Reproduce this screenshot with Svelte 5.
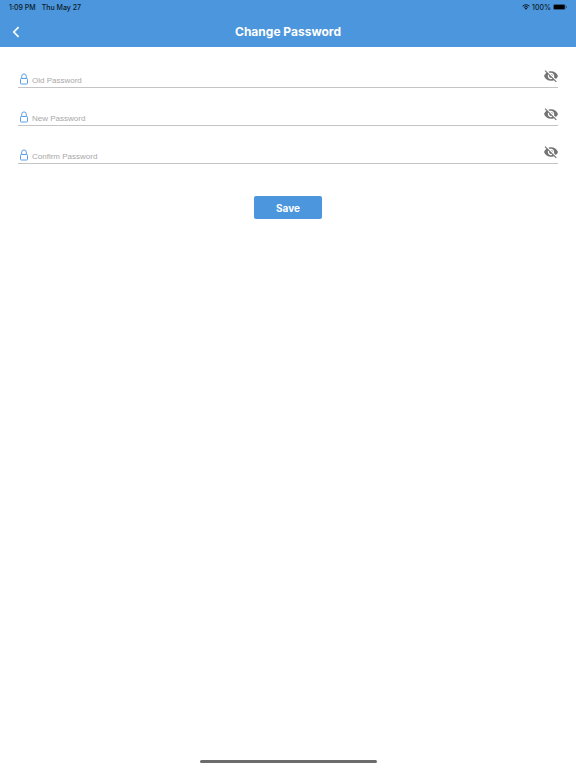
<script lang="ts">
	type Field = { id: string; label: string; autocomplete: 'current-password' | 'new-password' };

	const fields: Field[] = [
		{ id: 'old', label: 'Old Password', autocomplete: 'current-password' },
		{ id: 'new', label: 'New Password', autocomplete: 'new-password' },
		{ id: 'confirm', label: 'Confirm Password', autocomplete: 'new-password' }
	];

	let values: Record<string, string> = $state({ old: '', new: '', confirm: '' });
	let visible: Record<string, boolean> = $state({ old: false, new: false, confirm: false });
</script>

<div class="screen">
	<header class="header">
		<div class="status">
			<span>1:09 PM</span>
			<span>Thu May 27</span>
			<span class="status__right">
				<svg class="wifi" viewBox="0 0 16 12" aria-hidden="true">
					<path d="M1 4.4a10 10 0 0 1 14 0M3.6 7a6.3 6.3 0 0 1 8.8 0" fill="none" stroke="currentColor" stroke-width="2" />
					<path d="M8 11.5 5.4 8.9a3.7 3.7 0 0 1 5.2 0z" fill="currentColor" />
				</svg>
				<span>100%</span>
				<svg class="battery" viewBox="0 0 28 12" aria-hidden="true">
					<rect x="0.5" y="0.5" width="24" height="11" rx="3" fill="none" stroke="currentColor" opacity="0.5" />
					<rect x="1.5" y="1.5" width="22" height="9" rx="2" fill="currentColor" />
					<path d="M26 4v4c1-.3 1.6-1 1.6-2S27 4.3 26 4z" fill="currentColor" opacity="0.6" />
				</svg>
			</span>
		</div>
		<div class="bar">
			<button class="back" type="button" aria-label="Back">
				<svg viewBox="0 0 12 12" aria-hidden="true">
					<path d="M8.6 1.2 3.8 6l4.8 4.8" fill="none" stroke="currentColor" stroke-width="1.7" />
				</svg>
			</button>
			<h1 class="title">Change Password</h1>
		</div>
	</header>

	<form class="form" onsubmit={(e) => e.preventDefault()}>
		{#each fields as f (f.id)}
			<div class="field">
				<label class="field__icon" for={f.id} aria-label={f.label}>
					<svg viewBox="0 0 10 12" aria-hidden="true">
						<path d="M2.7 5.5V3.2a2.3 2.3 0 0 1 4.6 0v2.3" />
						<rect x="1.5" y="5.5" width="7" height="5.5" rx="0.8" />
					</svg>
				</label>
				<input
					class="field__input"
					id={f.id}
					type={visible[f.id] ? 'text' : 'password'}
					placeholder={f.label}
					autocomplete={f.autocomplete}
					bind:value={values[f.id]}
				/>
				<button
					class="field__toggle"
					type="button"
					aria-label="Show {f.label}"
					aria-pressed={visible[f.id]}
					onclick={() => (visible[f.id] = !visible[f.id])}
				>
					<svg viewBox="1 1 22 22" aria-hidden="true">
						<path
							d="M12 7c2.76 0 5 2.24 5 5 0 .65-.13 1.26-.36 1.83l2.92 2.92c1.51-1.26 2.7-2.89 3.43-4.75-1.73-4.39-6-7.5-11-7.5-1.4 0-2.74.25-3.98.7l2.16 2.16C10.74 7.13 11.35 7 12 7zM2 4.27l2.28 2.28.46.46C3.08 8.3 1.78 10.02 1 12c1.73 4.39 6 7.5 11 7.5 1.55 0 3.03-.3 4.38-.84l.42.42L19.73 22 21 20.73 3.27 3 2 4.27zM7.53 9.8l1.55 1.55c-.05.21-.08.43-.08.65 0 1.66 1.34 3 3 3 .22 0 .44-.03.65-.08l1.55 1.55c-.67.33-1.41.53-2.2.53-2.76 0-5-2.24-5-5 0-.79.2-1.53.53-2.2zm4.31-.78l3.15 3.15.02-.16c0-1.66-1.34-3-3-3l-.17.01z"
						/>
					</svg>
				</button>
			</div>
		{/each}
		<button class="save" type="submit">Save</button>
	</form>

	<div class="home"></div>
</div>

<style>
	:global(body) {
		margin: 0;
		background: #fff;
	}

	.screen {
		display: flex;
		flex-direction: column;
		min-height: 100vh;
		font-family: Inter, 'Liberation Sans', sans-serif;
	}

	svg {
		display: block;
	}

	button {
		padding: 0;
		border: 0;
		background: none;
		font: inherit;
		cursor: pointer;
	}

	.header {
		background: #4b96dc;
	}

	.status {
		display: flex;
		align-items: center;
		gap: 6px;
		height: 14px;
		padding: 0 9px;
		font-size: 7px;
		font-weight: 500;
		color: #0b1a28;
	}

	.status__right {
		display: flex;
		align-items: center;
		gap: 2px;
		margin-left: auto;
	}

	.wifi {
		width: 8px;
		height: 6px;
	}

	.battery {
		width: 14px;
		height: 6px;
		color: #000;
	}

	.bar {
		display: grid;
		grid-template-columns: 32px 1fr 32px;
		align-items: center;
		height: 33px;
		padding-top: 2px;
		box-sizing: border-box;
		color: #fff;
	}

	.back {
		display: grid;
		place-items: center;
		height: 32px;
		color: #fff;
	}

	.back svg {
		width: 12px;
		height: 12px;
	}

	.title {
		margin: 0;
		font-size: 12px;
		font-weight: 700;
		line-height: 16px;
		text-align: center;
	}

	.form {
		display: flex;
		flex-direction: column;
		gap: 14px;
		padding: 17px 18px;
	}

	.field {
		display: flex;
		align-items: flex-end;
		height: 24px;
		box-sizing: border-box;
		border-bottom: 1px solid #c4c4c4;
	}

	.field__icon {
		padding: 0 3px 2px 1px;
	}

	.field__icon svg {
		width: 10px;
		height: 12px;
		fill: none;
		stroke: #5b9fe2;
	}

	.field__input {
		flex: 1;
		min-width: 0;
		height: 14px;
		padding: 0;
		border: 0;
		outline: 0;
		background: none;
		font-family: 'Liberation Sans', sans-serif;
		font-size: 8px;
		color: #333;
	}

	.field__input::placeholder {
		color: #a8a8a8;
		opacity: 1;
	}

	.field__toggle {
		padding-bottom: 4px;
	}

	.field__toggle svg {
		width: 14px;
		height: 14px;
		fill: #747474;
	}

	.save {
		align-self: center;
		width: 68px;
		height: 23px;
		margin-top: 18px;
		border-radius: 2px;
		background: #4b96dc;
		font-size: 10px;
		font-weight: 700;
		color: #fff;
	}

	.home {
		width: 177px;
		height: 3px;
		margin: auto auto 5px;
		border-radius: 2px;
		background: #6c6c6c;
	}
</style>
